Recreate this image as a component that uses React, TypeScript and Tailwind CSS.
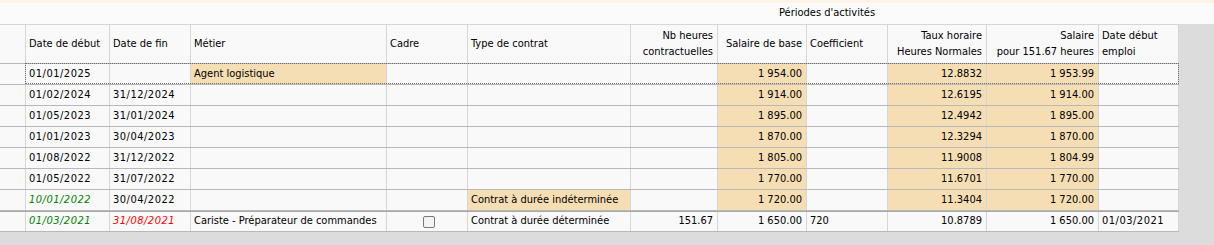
import React from 'react';

type Cell = {
    text?: string;
    wheat?: boolean;
    tone?: 'green' | 'red';
    check?: boolean;
};

// widths include the right border of each cell
const widths = [
    'w-[26px]', 'w-[84px]', 'w-[81px]', 'w-[196px]', 'w-[81px]', 'w-[163px]',
    'w-[87px]', 'w-[89px]', 'w-[81px]', 'w-[99px]', 'w-[112px]', 'w-[80px]',
];

// true = numbers, right aligned
const rightCols = [false, false, false, false, false, false, true, true, false, true, true, false];

const headers: string[][] = [
    [],
    ['Date de début'],
    ['Date de fin'],
    ['Métier'],
    ['Cadre'],
    ['Type de contrat'],
    ['Nb heures', 'contractuelles'],
    ['Salaire de base'],
    ['Coefficient'],
    ['Taux horaire', 'Heures Normales'],
    ['Salaire', 'pour 151.67 heures'],
    ['Date début', 'emploi'],
];

const paid = (base: string, taux: string, month: string, extra: Record<number, Cell> = {}): Cell[] => {
    const row: Cell[] = Array.from({ length: 12 }, () => ({}));
    row[7] = { text: base, wheat: true };
    row[9] = { text: taux, wheat: true };
    row[10] = { text: month, wheat: true };
    Object.entries(extra).forEach(([k, v]) => {
        row[Number(k)] = v;
    });
    return row;
};

const rows: Cell[][] = [
    paid('1 954.00', '12.8832', '1 953.99', { 1: { text: '01/01/2025' }, 3: { text: 'Agent logistique', wheat: true } }),
    paid('1 914.00', '12.6195', '1 914.00', { 1: { text: '01/02/2024' }, 2: { text: '31/12/2024' } }),
    paid('1 895.00', '12.4942', '1 895.00', { 1: { text: '01/05/2023' }, 2: { text: '31/01/2024' } }),
    paid('1 870.00', '12.3294', '1 870.00', { 1: { text: '01/01/2023' }, 2: { text: '30/04/2023' } }),
    paid('1 805.00', '11.9008', '1 804.99', { 1: { text: '01/08/2022' }, 2: { text: '31/12/2022' } }),
    paid('1 770.00', '11.6701', '1 770.00', { 1: { text: '01/05/2022' }, 2: { text: '31/07/2022' } }),
    paid('1 720.00', '11.3404', '1 720.00', {
        1: { text: '10/01/2022', tone: 'green' },
        2: { text: '30/04/2022' },
        5: { text: 'Contrat à durée indéterminée', wheat: true },
    }),
    [
        {},
        { text: '01/03/2021', tone: 'green' },
        { text: '31/08/2021', tone: 'red' },
        { text: 'Cariste - Préparateur de commandes' },
        { check: true },
        { text: 'Contrat à durée déterminée' },
        { text: '151.67' },
        { text: '1 650.00' },
        { text: '720' },
        { text: '10.8789' },
        { text: '1 650.00' },
        { text: '01/03/2021' },
    ],
];

const isDate = (t?: string) => !!t && /^\d\d\/\d\d\/\d{4}$/.test(t);

function DataCell({ cell, i }: { cell: Cell; i: number }) {
    const tone =
        cell.tone === 'green' ? 'text-[#008000] italic' : cell.tone === 'red' ? 'text-[#ff0000] italic' : 'text-black';
    return (
        <div
            className={`${widths[i]} shrink-0 h-full flex items-center border-r border-[#d6d6d6] whitespace-nowrap overflow-hidden ${
                rightCols[i] ? 'justify-end pr-[4px]' : 'pl-[3px]'
            } ${cell.wheat ? 'bg-[#f5deb3]' : ''} ${cell.check ? 'justify-center pl-0' : ''} ${
                isDate(cell.text) ? 'tracking-[0.5px]' : ''
            } ${tone}`}
        >
            {cell.check ? (
                <span className="block w-[12px] h-[12px] rounded-[2px] border border-[#7a7a7a] bg-[#f4f4f4]" />
            ) : (
                cell.text
            )}
        </div>
    );
}

export default function App() {
    return (
        <div
            className="w-[1214px] h-[245px] bg-[#dcdcdc] overflow-hidden text-[11px] text-black"
            style={{ fontFamily: '"DejaVu Sans Condensed", "DejaVu Sans", Tahoma, sans-serif', fontStretch: 'condensed' }}
        >
            <div className="h-[3px] bg-[#fdf4e6]" />
            <div className="h-[21px] bg-[#fbfbfb] flex items-center pl-[779px]">Périodes d'activités</div>

            <div className="w-[1179px] bg-[#f9f9f9]">
                {/* header */}
                <div className="flex h-[40px] border-t border-b border-t-[#d6d6d6] border-b-[#b8b8b8]">
                    {headers.map((lines, i) => (
                        <div
                            key={i}
                            className={`${widths[i]} shrink-0 h-full flex flex-col justify-center leading-[16px] border-r border-[#d6d6d6] whitespace-nowrap ${
                                rightCols[i] ? 'items-end pr-[4px]' : 'items-start pl-[3px]'
                            }`}
                        >
                            {lines.map((l) => (
                                <span key={l}>{l}</span>
                            ))}
                        </div>
                    ))}
                </div>

                {rows.map((row, r) => (
                    <div
                        key={r}
                        className={`relative flex border-b border-[#b8b8b8] ${
                            r === rows.length - 1 ? 'h-[21px] border-t border-t-[#a9a9a9]' : 'h-[21px]'
                        }`}
                    >
                        {row.map((cell, i) => (
                            <DataCell key={i} cell={cell} i={i} />
                        ))}
                        {r === 0 && (
                            <div className="absolute left-[25px] right-0 -top-px bottom-0 border border-dotted border-[#6f6f6f] pointer-events-none" />
                        )}
                    </div>
                ))}
            </div>
        </div>
    );
}
